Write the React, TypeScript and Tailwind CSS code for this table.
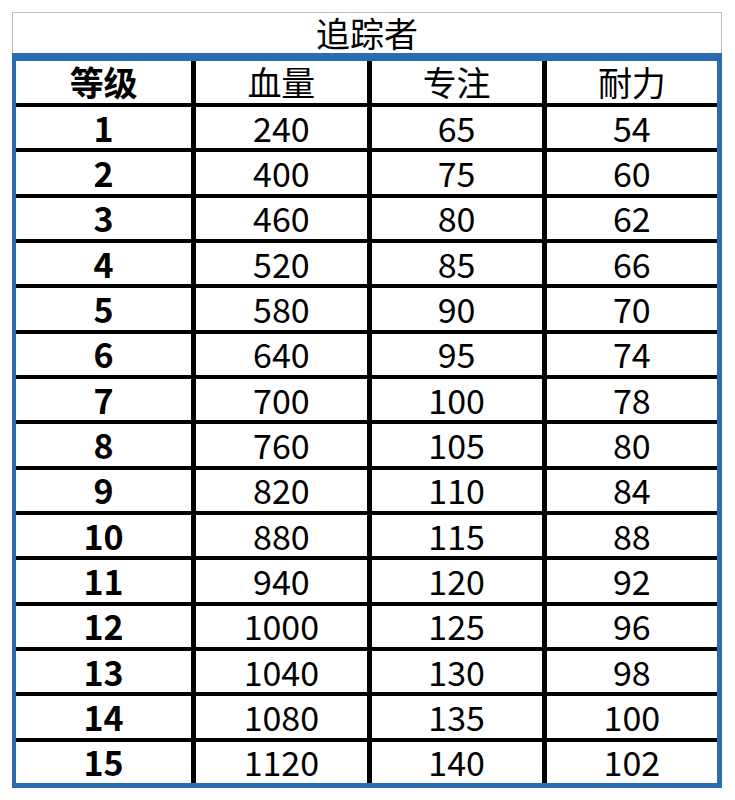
import React from 'react';

const rows: [number, number, number, number][] = [
  [1, 240, 65, 54],
  [2, 400, 75, 60],
  [3, 460, 80, 62],
  [4, 520, 85, 66],
  [5, 580, 90, 70],
  [6, 640, 95, 74],
  [7, 700, 100, 78],
  [8, 760, 105, 80],
  [9, 820, 110, 84],
  [10, 880, 115, 88],
  [11, 940, 120, 92],
  [12, 1000, 125, 96],
  [13, 1040, 130, 98],
  [14, 1080, 135, 100],
  [15, 1120, 140, 102],
];

const headers = ['等级', '血量', '专注', '耐力'];

export default function App() {
  return (
    <div
      className="w-[735px] h-[800px] bg-white pt-[12px] pl-[12px] text-black"
      style={{ fontFamily: '"Noto Sans CJK SC", "Noto Sans", sans-serif' }}
    >
      <div className="w-[710px]">
        {/* title */}
        <div className="h-[41px] border-t border-l border-r border-[#bdbdbd] flex items-center justify-center text-[34px] leading-none">
          追踪者
        </div>

        {/* table */}
        <div className="border-t-[8px] border-l-[4px] border-r-[5px] border-b-[5px] border-[#2a6cb2]">
          <div className="grid grid-cols-4 h-[42px]">
            {headers.map((h, i) => (
              <div
                key={h}
                className={
                  'flex items-center justify-center text-[34px] leading-none ' +
                  (i === 0 ? 'font-bold' : 'border-l-[5px] border-black')
                }
              >
                {h}
              </div>
            ))}
          </div>
          {rows.map((r) => (
            <div key={r[0]} className="grid grid-cols-4 h-[45.33px] border-t-[4px] border-black">
              {r.map((v, i) => (
                <div
                  key={i}
                  className={
                    'flex items-center justify-center text-[34px] leading-none ' +
                    (i === 0 ? 'font-bold' : 'border-l-[5px] border-black')
                  }
                >
                  {v}
                </div>
              ))}
            </div>
          ))}
        </div>
      </div>
    </div>
  );
}
